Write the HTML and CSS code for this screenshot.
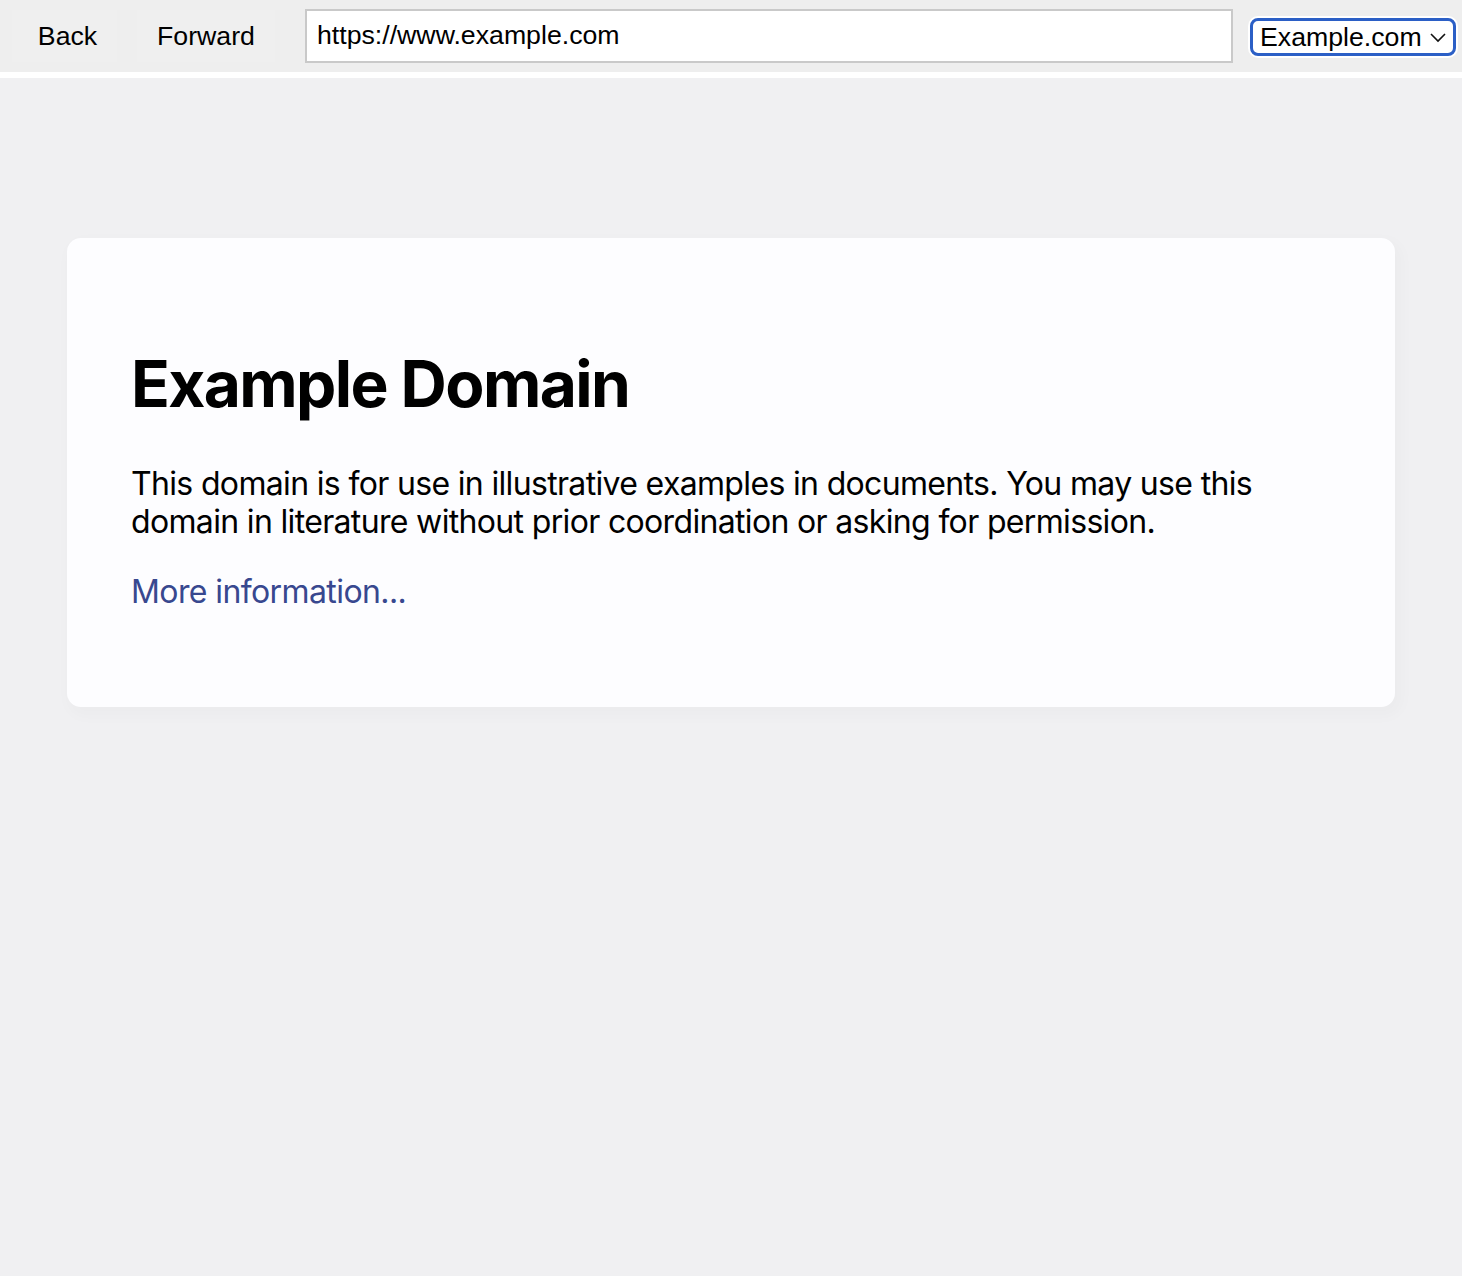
FILE: index.html
```html
<!DOCTYPE html>
<html>
<head>
<meta charset="utf-8">
<title>Example Domain</title>
<link rel="stylesheet" href="styles.css">
</head>
<body>
<div class="toolbar">
  <button class="nav-btn back">Back</button>
  <button class="nav-btn forward">Forward</button>
  <div class="url">https://www.example.com</div>
  <div class="select">
    <span class="select-text">Example.com</span>
    <svg class="chev" width="18" height="12" viewBox="0 0 18 12"><path d="M2 3 L9 10 L16 3" fill="none" stroke="#111" stroke-width="1.6"/></svg>
  </div>
</div>
<div class="divider"></div>
<main class="page">
  <div class="card">
    <h1 class="title">Example Domain</h1>
    <p class="text">This domain is for use in illustrative examples in documents. You may use this domain in literature without prior coordination or asking for permission.</p>
    <p class="text"><a class="link" href="#">More information...</a></p>
  </div>
</main>
</body>
</html>
```

FILE: styles.css
```css
html, body {
  margin: 0;
  padding: 0;
}
body {
  background: #f0f0f2;
  min-height: 1276px;
}
.toolbar {
  height: 72px;
  background: #eeeeee;
  display: flex;
  align-items: center;
  padding: 0 6px 0 12px;
  box-sizing: border-box;
  font-family: "Liberation Sans", Arial, sans-serif;
  font-size: 26.7px;
  color: #000;
}
.nav-btn {
  font-family: inherit;
  font-size: 26.7px;
  background: #efefef;
  border: none;
  height: 52px;
  margin: 0;
  color: #000;
}
.back {
  width: 105px;
  padding: 0 0 0 6px;
}
.forward {
  width: 138px;
  margin-left: 20px;
  padding: 0;
}
.url {
  flex: 1;
  margin-left: 30px;
  height: 54px;
  box-sizing: border-box;
  border: 2px solid #c9c9c9;
  background: #fff;
  display: flex;
  align-items: center;
  padding-left: 10px;
  padding-bottom: 2px;
}
.select {
  margin-left: 17px;
  width: 206px;
  height: 38px;
  box-sizing: border-box;
  border: 3px solid #2b5fc6;
  border-radius: 8px;
  background: #fff;
  box-shadow: 0 0 0 2px #fff;
  display: flex;
  align-items: center;
  padding-left: 7px;
  margin-top: 2px;
}
.select-text {
  flex: 1;
}
.chev {
  margin-right: 6px;
}
.divider {
  height: 6px;
  background: #ffffff;
}
.page {
  padding-top: 160px;
  font-family: Inter, "Noto Sans", sans-serif;
}
.card {
  width: 1200px;
  margin: 0 auto;
  padding: 64px;
  background: #fdfdff;
  border-radius: 14px;
  box-shadow: 4px 6px 14px 4px rgba(0, 0, 0, 0.02);
}
.title {
  font-size: 64px;
  font-weight: 700;
  margin: 43px 0;
  line-height: 77px;
  letter-spacing: -1.6px;
  color: #000;
}
.text {
  font-size: 32px;
  line-height: 38px;
  margin: 32px 0;
  letter-spacing: -0.66px;
  color: #000;
}
.link {
  color: #38488f;
  text-decoration: none;
  letter-spacing: -0.6px;
}
```
